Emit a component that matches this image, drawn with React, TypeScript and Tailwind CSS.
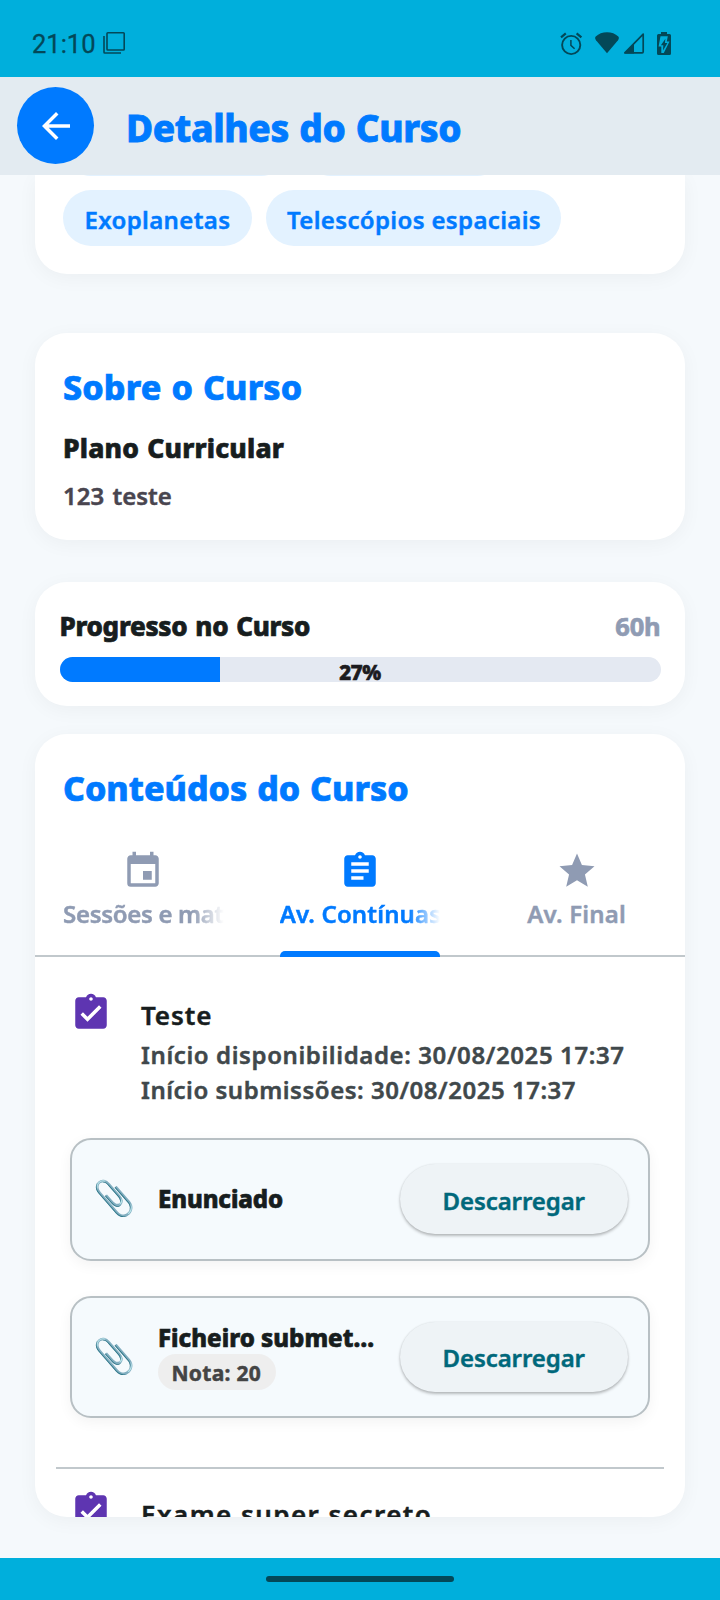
import type { ReactNode } from "react";
import { MdArrowBack, MdAssignment, MdAssignmentTurnedIn, MdEvent, MdStar } from "react-icons/md";

function StatusBar() {
  return (
    <div className="flex h-[77px] shrink-0 items-start bg-[#00afdc] pt-[28px] pl-[32px] text-[#034858]">
      <span className="mt-[1.5px] w-[71px] font-[Roboto] text-[25.5px] leading-[28px] [-webkit-text-stroke:0.3px]">21:10</span>
      <svg className="mt-[4px]" width="22" height="22" viewBox="0 0 22 22" fill="none" stroke="currentColor" strokeWidth="1.6">
        <rect x="4" y="0.8" width="17.2" height="17.2" rx="0.8" />
        <path d="M1 4v16.2q0 .8.8.8H18" />
      </svg>
      <svg className="mt-[4px] ml-[435px]" width="23" height="24" viewBox="0 0 23 24" fill="none" stroke="currentColor">
        <circle cx="11.2" cy="13" r="9.1" strokeWidth="1.9" />
        <path d="M10.9 8v5.4l3.7 3.4" strokeWidth="1.5" />
        <path d="M1 5.4 5.8 1.4M16.6 1.4l4.8 4" strokeWidth="2.2" />
      </svg>
      <svg className="mt-[4px] ml-[12px]" width="24" height="22" viewBox="0 0 24 22" fill="currentColor">
        <path d="M12 21.2 1 8.2Q-.6 6 .7 4.6 5.2.2 12 .2t11.3 4.4Q24.6 6 23 8.2Z" />
      </svg>
      <svg className="mt-[4px] ml-[4px]" width="22" height="22" viewBox="0 0 22 22" fill="none" stroke="currentColor" strokeWidth="1.7">
        <path d="M1.8 20.8 20.2 2.2V19.8q0 1-1 1Z" strokeLinejoin="round" />
        <path d="M1.5 21.5 11 12v9.5Z" fill="currentColor" stroke="none" />
      </svg>
      <svg className="mt-[4px] ml-[12px]" width="14" height="23" viewBox="0 0 14 23">
        <path fill="currentColor" d="M4 0h6v2h2.500Q14 2 14 3.500v18q0 1.500-1.500 1.500h-11Q0 23 0 21.500v-18Q0 2 1.500 2H4Z" />
        <path fill="#00afdc" d="M3.500 4.200h7.300l-1 5.200h2.700L6.800 21H4.300v-6.600H1.600Z" />
        <path fill="currentColor" d="M8.400 6.800 3.900 13.200h2.400l-.3 5.400 4.400-7.600H7.900Z" />
      </svg>
    </div>
  );
}

function Header() {
  return (
    <header className="flex h-[98px] shrink-0 items-start bg-[#e3ebf1] pt-[10.4px] pl-[17.4px]">
      <button className="flex size-[77px] items-center justify-center rounded-full bg-[#007aff] text-white">
        <MdArrowBack className="size-[42px]" />
      </button>
      <h1 className="mt-[17px] ml-[31.600px] text-[37px] leading-[48px] font-extrabold tracking-[-0.35px] [word-spacing:1px] text-[#007aff] [-webkit-text-stroke:0.8px]">
        Detalhes do Curso
      </h1>
    </header>
  );
}

const cardShadow = "shadow-[0_4px_20px_rgba(0,0,0,0.045)]";
const heavy = "font-extrabold [-webkit-text-stroke:0.7px]";
const medium = "font-semibold [-webkit-text-stroke:0.45px]";

function Tags() {
  return (
    <section className={`h-[99px] rounded-b-[32px] bg-white px-[28px] ${cardShadow}`}>
      <div className="flex h-[1px] items-end gap-[14px] overflow-hidden">
        <span className="h-[56px] w-[226px] rounded-full bg-[#e3f2ff]" />
        <span className="h-[56px] w-[202px] rounded-full bg-[#e3f2ff]" />
      </div>
      <div className={`mt-[14px] flex gap-[14px] text-[24px] leading-[28px] text-[#007aff] ${medium}`}>
        <span className="h-[56px] w-[188.5px] rounded-full bg-[#e3f2ff] pt-[16px] pl-[21.5px] tracking-[0.35px]">Exoplanetas</span>
        <span className="h-[56px] w-[295.5px] rounded-full bg-[#e3f2ff] pt-[16px] pl-[21.5px] tracking-[0.35px]">Telescópios espaciais</span>
      </div>
    </section>
  );
}

function About() {
  return (
    <section className={`mt-[59px] h-[207px] rounded-[32px] bg-white px-[28px] pt-[33.500px] ${cardShadow}`}>
      <h2 className={`text-[34px] leading-[40px] tracking-[0.15px] [word-spacing:1px] text-[#007aff] ${heavy}`}>Sobre o Curso</h2>
      <h3 className={`mt-[25px] text-[26.5px] leading-[32px] tracking-[0.2px] [word-spacing:1px] text-[#171d1e] ${heavy}`}>Plano Curricular</h3>
      <p className={`mt-[18px] text-[24px] leading-[28px] [word-spacing:2px] text-[#49454f] ${medium}`}>123 teste</p>
    </section>
  );
}

function Progress() {
  const value = 27;
  return (
    <section className={`mt-[42px] h-[124px] rounded-[32px] bg-white px-[24.5px] pt-[28px] ${cardShadow}`}>
      <div className="flex justify-between">
        <h3 className={`text-[26px] leading-[32px] tracking-[-0.3px] [word-spacing:1.5px] text-[#171d1e] ${heavy}`}>Progresso no Curso</h3>
        <span className="text-[25.5px] leading-[32px] font-bold tracking-[-0.2px] text-[#8f9bb3] [-webkit-text-stroke:0.7px]">60h</span>
      </div>
      <div className="mt-[15px] grid h-[25px] rounded-full bg-[#e4e9f2]">
        <div className="[grid-area:1/1] overflow-hidden rounded-full">
          <div className="h-full bg-[#007aff]" style={{ width: `${value - 0.3}%` }} />
        </div>
        <span className={`[grid-area:1/1] h-[24px] pt-[2px] text-center text-[20.5px] leading-[26px] tracking-[-0.3px] text-[#1c1b1f] ${heavy}`}>
          {value}%
        </span>
      </div>
    </section>
  );
}

function Tab({ icon, label, active }: { icon: ReactNode; label: ReactNode; active?: boolean }) {
  return (
    <div className={`flex min-w-0 flex-col items-center px-[28px] ${active ? "text-[#007aff]" : "text-[#8f9bb3]"}`}>
      {icon}
      {label}
      <span className={`mt-[23px] h-[6px] w-full rounded-t-[5px] ${active ? "bg-[#007aff]" : ""}`} />
    </div>
  );
}

const tabLabel = "mt-[8px] h-[28px] text-[24px] leading-[28px] font-semibold [-webkit-text-stroke:0.45px] whitespace-nowrap";
const faded = "w-full overflow-x-clip [mask-image:linear-gradient(to_right,black_80%,transparent)]";

function Activity({ title, children, className }: { title: ReactNode; children?: ReactNode; className: string }) {
  return (
    <div className={`flex shrink-0 gap-[29px] pl-[35px] ${className}`}>
      <MdAssignmentTurnedIn className="size-[42px] shrink-0 text-[#5e35b1]" />
      <div className="pt-[7px]">
        {title}
        {children}
      </div>
    </div>
  );
}

function Attachment({ children }: { children: ReactNode }) {
  return (
    <div className="flex h-[122.5px] items-center rounded-[21px] border-2 border-[#b8c0c4] bg-[#f5fafd] pr-[20.5px] pl-[21px] shadow-[0_4px_14px_rgba(0,0,0,0.05)]">
      <span className="-mt-[4px] w-[42px] text-[34px] leading-[42px]">📎</span>
      <div className={`ml-[23px] w-[220px] text-[24px] leading-[28px] whitespace-nowrap text-[#171d1e] ${heavy}`}>{children}</div>
      <button
        className={`ml-auto flex h-[70px] w-[227.5px] items-center justify-center rounded-full bg-[#eef3f6] pt-[3px] text-[24px] leading-[28px] tracking-[-0.1px] text-[#00687b] shadow-[0_2px_3px_rgba(0,0,0,0.25),0_0_2px_rgba(0,0,0,0.1)] ${medium}`}
      >
        Descarregar
      </button>
    </div>
  );
}

function Contents() {
  return (
    <section className={`mt-[28px] flex h-[783px] flex-col overflow-hidden rounded-[32px] bg-white pt-[34px] ${cardShadow}`}>
      <h2 className={`pl-[28px] text-[34px] leading-[40px] [word-spacing:1px] text-[#007aff] ${heavy}`}>Conteúdos do Curso</h2>
      <div className="mt-[42px] grid grid-cols-3 shadow-[inset_0_-2px_0_#c1c8cc]">
        <Tab icon={<MdEvent className="size-[42px]" />} label={<span className={`${tabLabel} ${faded} tracking-[-0.3px]`}>Sessões e materiais</span>} />
        <Tab active icon={<MdAssignment className="size-[42px]" />} label={<span className={`${tabLabel} ${faded} tracking-[0.15px]`}>Av. Contínuas</span>} />
        <Tab icon={<MdStar className="size-[42px]" />} label={<span className={`${tabLabel} tracking-[0.2px]`}>Av. Final</span>} />
      </div>
      <Activity className="pt-[35px]" title={<h3 className={`text-[26px] leading-[32px] tracking-[0.9px] text-[#171d1e] ${medium}`}>Teste</h3>}>
        <p className={`mt-[6px] text-[24px] leading-[35px] text-[#40484b] ${medium}`}>
          <span className="block tracking-[0.6px]">Início disponibilidade: 30/08/2025 17:37</span>
          <span className="block tracking-[0.52px]">Início submissões: 30/08/2025 17:37</span>
        </p>
      </Activity>
      <div className="mx-[35px] mt-[31px] flex shrink-0 flex-col gap-[35px]">
        <Attachment>
          <div className="tracking-[-0.1px]">Enunciado</div>
        </Attachment>
        <Attachment>
          <div className="mt-[1px] tracking-[0.02px]">Ficheiro submet…</div>
          <div className="mt-[2px] h-[36px] w-[118px] rounded-full bg-[#eeeeee] pt-[5.5px] pl-[13.5px] text-[21px] leading-[26px] font-bold tracking-[0.3px] text-[#444444] [-webkit-text-stroke:0.5px]">
            Nota: 20
          </div>
        </Attachment>
      </div>
      <hr className="mx-[21px] mt-[48.5px] h-[2px] shrink-0 border-0 bg-[#c1c8cc]" />
      <Activity className="pt-[21px]" title={<h3 className={`mt-[1.5px] text-[26px] leading-[32px] tracking-[1.45px] text-[#171d1e] ${medium}`}>Exame super secreto</h3>} />
    </section>
  );
}

export default function App() {
  return (
    <div className="flex h-[1600px] w-[720px] flex-col overflow-hidden bg-[#f5f9fc] font-['Noto_Sans',sans-serif]">
      <StatusBar />
      <Header />
      <main className="h-[1383px] shrink-0 overflow-hidden px-[35px]">
        <Tags />
        <About />
        <Progress />
        <Contents />
      </main>
      <footer className="flex h-[42px] shrink-0 justify-center bg-[#00afdc] pt-[18px]">
        <span className="h-[6px] w-[188px] rounded-full bg-[#034858]" />
      </footer>
    </div>
  );
}
